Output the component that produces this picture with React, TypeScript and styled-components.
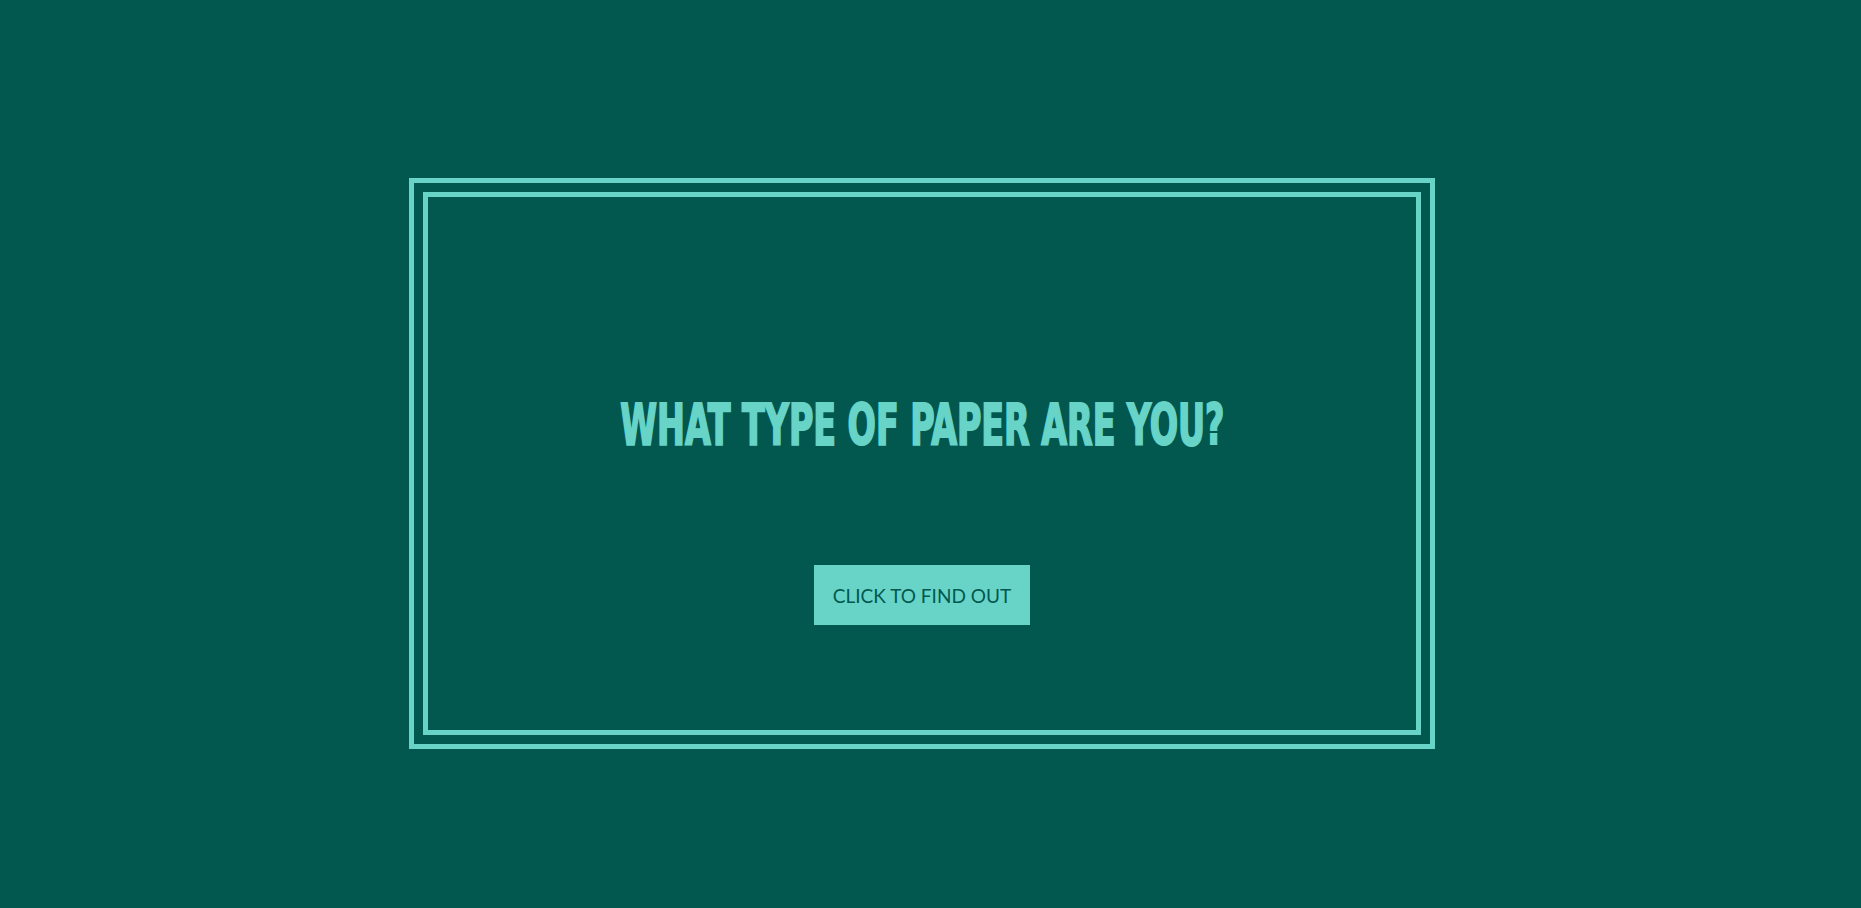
import React from 'react'
import styled, { createGlobalStyle } from 'styled-components'

const GlobalStyle = createGlobalStyle`
  html, body {
    margin: 0;
    padding: 0;
    background-color: #02584f;
  }
`

const Page = styled.main`
  min-height: 908px;
  padding: 178px 0 0 409px;
  box-sizing: border-box;
`

const OuterFrame = styled.section`
  width: 1026px;
  height: 571px;
  box-sizing: border-box;
  border: 5px solid #68d4c8;
  padding: 9px;
`

const InnerFrame = styled.div`
  height: 100%;
  box-sizing: border-box;
  border: 5px solid #68d4c8;
  display: flex;
  flex-direction: column;
  align-items: center;
  padding-top: 200px;
`

const Title = styled.h1`
  margin: 0;
  font-family: 'DejaVu Sans', sans-serif;
  font-stretch: condensed;
  font-weight: 700;
  font-size: 57px;
  line-height: 1;
  color: #68d4c8;
  text-transform: uppercase;
  white-space: nowrap;
  display: inline-block;
  transform: scaleX(0.649);
  -webkit-text-stroke: 2px #68d4c8;
`

const FindOutButton = styled.button`
  margin-top: 111px;
  height: 60px;
  padding: 0 19px;
  border: none;
  background-color: #68d4c8;
  color: #02584f;
  font-family: Lato, 'Open Sans', sans-serif;
  font-size: 19px;
  text-transform: uppercase;
  cursor: pointer;
`

export default function App() {
  return (
    <>
      <GlobalStyle />
      <Page>
        <OuterFrame>
          <InnerFrame>
            <Title>What type of paper are you?</Title>
            <FindOutButton>Click to find out</FindOutButton>
          </InnerFrame>
        </OuterFrame>
      </Page>
    </>
  )
}
